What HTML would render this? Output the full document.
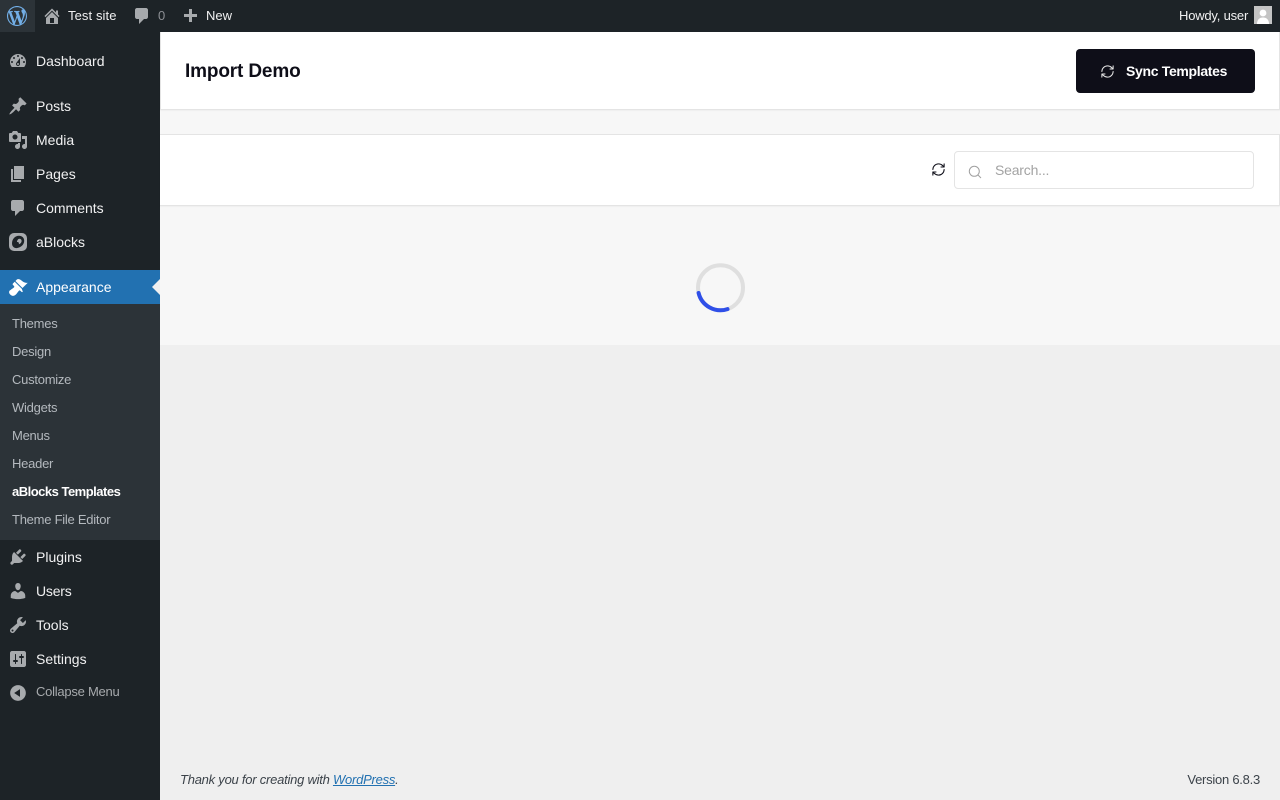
<!DOCTYPE html>
<html lang="en"><head><meta charset="utf-8"><title>Import Demo</title>
<style>
*{box-sizing:border-box}
html,body{margin:0;padding:0;width:1280px;height:800px;overflow:hidden;background:#efefef;font-family:"Liberation Sans",sans-serif;font-size:14px;color:#3c434a}
.a{position:absolute;white-space:nowrap}
#bar{left:0;top:0;width:1280px;height:32px;background:#1d2327}
#side{left:0;top:32px;width:160px;height:768px;background:#1d2327}
.t{position:absolute;line-height:20px;white-space:nowrap}
.m{color:#f0f0f1;font-size:14px;left:36px}
.s{color:#b4b9be;font-size:13px;left:12px;letter-spacing:-.25px}
.b{color:#f0f0f1;font-size:13px}
svg{position:absolute;display:block}
.i{fill:#a7aaad}
</style></head><body>
<div class="a" id="bar"></div>
<div class="a" id="side"></div>
<div class="a" style="left:0;top:0;width:35px;height:32px;background:#2c3338"></div>
<svg style="left:7px;top:6px" width="20" height="20" viewBox="0 0 20 20"><path fill="#72aee6" fill-rule="evenodd" d="M20 10c0-5.51-4.49-10-10-10C4.48 0 0 4.49 0 10c0 5.52 4.48 10 10 10 5.51 0 10-4.48 10-10zM7.78 15.37L4.37 6.22c.55-.02 1.17-.08 1.17-.08.5-.06.44-1.13-.06-1.11 0 0-1.45.11-2.37.11-.18 0-.37 0-.58-.01C4.12 2.69 6.87 1.11 10 1.11c2.33 0 4.45.87 6.05 2.34-.68-.11-1.65.39-1.65 1.58 0 .74.45 1.36.9 2.1.35.61.55 1.36.55 2.46 0 1.49-1.4 5-1.4 5l-3.03-8.37c.54-.02.82-.17.82-.17.5-.05.44-1.25-.06-1.22 0 0-1.44.12-2.38.12-.87 0-2.33-.12-2.33-.12-.5-.03-.56 1.2-.06 1.22l.92.08 1.26 3.41zM17.41 10c.24-.64.74-1.87.43-4.25.7 1.29 1.05 2.71 1.05 4.25 0 3.29-1.73 6.24-4.4 7.78.97-2.59 1.94-5.2 2.92-7.78zM6.1 18.09C3.12 16.65 1.11 13.53 1.11 10c0-1.3.23-2.48.72-3.59C3.25 10.3 4.67 14.2 6.1 18.09zm4.03-6.63l2.58 6.98c-.86.29-1.76.45-2.71.45-.79 0-1.57-.11-2.29-.33.81-2.38 1.62-4.74 2.42-7.1z"/></svg>
<svg class="i" style="left:42px;top:6px" width="20" height="20" viewBox="0 0 20 20"><path d="M16 8.5l1.53 1.53-1.06 1.06L10 4.62l-6.47 6.47-1.06-1.06L10 2.5l4 4v-2h2v4zm-6-2.46l6 5.99V18H4v-5.97zM12 17v-5H8v5h4z"/></svg>
<div class="t b" style="left:68px;top:6px;letter-spacing:.1px">Test site</div>
<svg class="i" style="left:132px;top:6px" width="20" height="20" viewBox="0 0 20 20"><path d="M5 2h9c1.1 0 2 .9 2 2v7c0 1.1-.9 2-2 2h-2l-5 5v-5H5c-1.1 0-2-.9-2-2V4c0-1.1.9-2 2-2z"/></svg>
<div class="t" style="left:158px;top:6px;font-size:13px;color:#8c8f94">0</div>
<svg class="i" style="left:180px;top:7px" width="20" height="20" viewBox="0 0 20 20"><path d="M17 7v3h-5v5H9v-5H4V7h5V2h3v5h5z"/></svg>
<div class="t b" style="left:206px;top:6px">New</div>
<div class="t b" style="left:1179px;top:6px;letter-spacing:-.2px">Howdy, user</div>
<div class="a" style="left:1254px;top:6px;width:18px;height:18px;background:#c4c4c4;overflow:hidden"><svg style="left:0;top:0" width="18" height="18" viewBox="0 0 18 18"><circle cx="9" cy="7" r="3.4" fill="#fff"/><path fill="#fff" d="M3 18c0-4.5 2.5-6.5 6-6.5s6 2 6 6.5z"/></svg></div>

<svg class="i" style="left:8px;top:51px" width="20" height="20" viewBox="0 0 20 20"><path d="M3.76 16h12.48c1.1-1.37 1.76-3.11 1.76-5 0-4.42-3.58-8-8-8s-8 3.58-8 8c0 1.89.66 3.63 1.76 5zM10 4c.55 0 1 .45 1 1s-.45 1-1 1-1-.45-1-1 .45-1 1-1zM6 6c.55 0 1 .45 1 1s-.45 1-1 1-1-.45-1-1 .45-1 1-1zm8 0c.55 0 1 .45 1 1s-.45 1-1 1-1-.45-1-1 .45-1 1-1zm-5.37 5.55L12 7v6c0 1.1-.9 2-2 2s-2-.9-2-2c0-.57.24-1.08.63-1.45zM4 10c.55 0 1 .45 1 1s-.45 1-1 1-1-.45-1-1 .45-1 1-1zm12 0c.55 0 1 .45 1 1s-.45 1-1 1-1-.45-1-1 .45-1 1-1zm-5 3c0-.55-.45-1-1-1s-1 .45-1 1 .45 1 1 1 1-.45 1-1z"/></svg>
<div class="t m" style="top:51px">Dashboard</div>
<svg class="i" style="left:8px;top:96px" width="20" height="20" viewBox="0 0 20 20"><path d="M10.44 3.02l1.82-1.82 6.36 6.35-1.83 1.82c-1.05-.68-2.48-.57-3.41.36l-.75.75c-.92.93-1.04 2.35-.35 3.41l-1.83 1.82-2.41-2.41-2.8 2.79c-.42.42-3.38 2.71-3.8 2.29s1.86-3.39 2.28-3.81l2.79-2.79L4.1 9.36l1.83-1.82c1.05.69 2.48.57 3.4-.36l.75-.75c.93-.92 1.05-2.35.36-3.41z"/></svg>
<div class="t m" style="top:96px">Posts</div>
<svg class="i" style="left:8px;top:130px" width="20" height="20" viewBox="0 0 20 20"><path d="M13 11V4c0-.55-.45-1-1-1h-1.67L9 1H5L3.67 3H2c-.55 0-1 .45-1 1v7c0 .55.45 1 1 1h10c.55 0 1-.45 1-1zM7 4.5c1.38 0 2.5 1.12 2.5 2.5S8.38 9.5 7 9.5 4.5 8.38 4.5 7 5.62 4.5 7 4.5zM14 6h5v10.5c0 1.38-1.12 2.5-2.5 2.5S14 17.88 14 16.5s1.12-2.5 2.5-2.5c.17 0 .34.02.5.05V9h-3V6zm-4 8.05V13h2v3.5c0 1.38-1.12 2.5-2.5 2.5S7 17.88 7 16.5 8.12 14 9.5 14c.17 0 .34.02.5.05z"/></svg>
<div class="t m" style="top:130px">Media</div>
<svg class="i" style="left:8px;top:164px" width="20" height="20" viewBox="0 0 20 20"><path d="M6 15V2h10v13H6zm-1 1h8v2H3V5h2v11z"/></svg>
<div class="t m" style="top:164px">Pages</div>
<svg class="i" style="left:8px;top:198px" width="20" height="20" viewBox="0 0 20 20"><path d="M5 2h9c1.1 0 2 .9 2 2v7c0 1.1-.9 2-2 2h-2l-5 5v-5H5c-1.1 0-2-.9-2-2V4c0-1.1.9-2 2-2z"/></svg>
<div class="t m" style="top:198px">Comments</div>
<svg style="left:9px;top:233px" width="18" height="18" viewBox="0 0 18 18"><rect width="18" height="18" rx="5" fill="#a7aaad"/><path fill="#1d2327" d="M10 2.8c3 0 5.2 2.1 5.2 5 0 3.6-3.2 7-7.4 7.3C5 15.3 3 13.4 3 10.4 3 6.2 6 2.8 10 2.8z"/><path fill="#a7aaad" d="M10.4 5.8c1.3 0 2.2.9 2.2 2.1 0 1.5-1.1 3-2.8 3.3.3-1 .1-1.7-.5-2-.5-.3-1-.3-1.4-.1.3-1.9 1.2-3.3 2.5-3.3z"/></svg>
<div class="t m" style="top:232px">aBlocks</div>

<div class="a" style="left:0;top:270px;width:160px;height:34px;background:#2271b1"></div>
<div class="a" style="left:152px;top:279px;width:0;height:0;border:8px solid transparent;border-left:0;border-right-color:#f0f0f1"></div>
<svg style="left:8px;top:277px;fill:#fff" width="20" height="20" viewBox="0 0 20 20"><path d="M14.48 11.06L7.41 3.99l1.5-1.5c.5-.56 2.3-.47 3.51.32 1.21.8 1.43 1.28 2.91 2.1 1.18.64 2.45 1.26 4.45.85zm-.71.71L6.7 4.7 4.93 6.47c-.39.39-.39 1.02 0 1.41l1.06 1.06c.39.39.39 1.03 0 1.42-.6.6-1.43 1.11-2.21 1.69-.35.26-.7.53-1.01.84C1.43 13.23 0 15.37 2.32 17.68s4.45.89 6.08-.74c.31-.31.58-.66.84-1.01.58-.78 1.09-1.61 1.69-2.21.39-.39 1.02-.39 1.41 0l1.06 1.06c.39.39 1.02.39 1.41 0z"/></svg>
<div class="t m" style="top:277px;color:#fff">Appearance</div>
<div class="a" style="left:0;top:304px;width:160px;height:236px;background:#2c3338"></div>
<div class="t s" style="top:314px">Themes</div>
<div class="t s" style="top:342px">Design</div>
<div class="t s" style="top:370px">Customize</div>
<div class="t s" style="top:398px">Widgets</div>
<div class="t s" style="top:426px">Menus</div>
<div class="t s" style="top:454px">Header</div>
<div class="t s" style="top:482px;color:#fff;font-weight:bold;letter-spacing:-.5px">aBlocks Templates</div>
<div class="t s" style="top:510px">Theme File Editor</div>

<svg class="i" style="left:8px;top:547px" width="20" height="20" viewBox="0 0 20 20"><path d="M13.11 4.36L9.87 7.6 8 5.73l3.24-3.24c.35-.34 1.05-.2 1.56.32.52.51.66 1.21.31 1.55zm-8 1.77l.91-1.12 9.01 9.01-1.19.84c-.71.71-2.63 1.16-3.82 1.16H6.14L4.9 17.26c-.59.59-1.54.59-2.12 0-.59-.58-.59-1.53 0-2.12l1.24-1.24v-3.88c0-1.13.4-3.19 1.09-3.89zm7.26 3.97l3.24-3.24c.34-.35 1.04-.21 1.55.31.52.51.66 1.21.31 1.55l-3.24 3.25z"/></svg>
<div class="t m" style="top:547px">Plugins</div>
<svg class="i" style="left:8px;top:581px" width="20" height="20" viewBox="0 0 20 20"><path d="M10 9.25c-2.27 0-2.73-3.44-2.73-3.44C7 4.02 7.82 2 9.97 2c2.16 0 2.98 2.02 2.71 3.81 0 0-.41 3.44-2.68 3.44zm0 2.57L12.72 10c2.39 0 4.52 2.33 4.52 4.53v2.49s-3.65 1.13-7.24 1.13c-3.65 0-7.24-1.13-7.24-1.13v-2.49c0-2.25 1.94-4.48 4.47-4.48z"/></svg>
<div class="t m" style="top:581px;letter-spacing:-.2px">Users</div>
<svg class="i" style="left:8px;top:615px" width="20" height="20" viewBox="0 0 20 20"><path d="M16.68 9.77c-1.34 1.34-3.3 1.67-4.95.99l-5.41 6.52c-.99.99-2.59.99-3.58 0s-.99-2.59 0-3.57l6.52-5.42c-.68-1.65-.35-3.61.99-4.95 1.28-1.28 3.12-1.62 4.72-1.06l-2.89 2.89 2.82 2.82 2.86-2.87c.53 1.58.18 3.39-1.08 4.65zM3.81 16.21c.4.39 1.04.39 1.43 0 .4-.4.4-1.04 0-1.43-.39-.4-1.03-.4-1.43 0-.39.39-.39 1.03 0 1.43z"/></svg>
<div class="t m" style="top:615px">Tools</div>
<svg class="i" style="left:8px;top:649px" width="20" height="20" viewBox="0 0 20 20"><path d="M18 16V4c0-1.1-.9-2-2-2H4c-1.1 0-2 .9-2 2v12c0 1.1.9 2 2 2h12c1.1 0 2-.9 2-2zM8 11h1c.55 0 1 .45 1 1s-.45 1-1 1H8v1.5c0 .28-.22.5-.5.5s-.5-.22-.5-.5V13H6c-.55 0-1-.45-1-1s.45-1 1-1h1V5.5c0-.28.22-.5.5-.5s.5.22.5.5V11zm5-2h-1c-.55 0-1-.45-1-1s.45-1 1-1h1V5.5c0-.28.22-.5.5-.5s.5.22.5.5V7h1c.55 0 1 .45 1 1s-.45 1-1 1h-1v5.5c0 .28-.22.5-.5.5s-.5-.22-.5-.5V9z"/></svg>
<div class="t m" style="top:649px">Settings</div>
<svg class="i" style="left:8px;top:683px" width="20" height="20" viewBox="0 0 20 20"><path d="M10 2.16c4.33 0 7.84 3.51 7.84 7.84s-3.51 7.84-7.84 7.84S2.16 14.33 2.16 10 5.71 2.16 10 2.16zm2 11.72V6.12L6.18 9.97z"/></svg>
<div class="t" style="left:36px;top:682px;font-size:13px;color:#a7aaad;letter-spacing:-.25px">Collapse Menu</div>

<div class="a" style="left:160px;top:110px;width:1120px;height:235px;background:#f7f7f7"></div>
<div class="a" style="left:160px;top:32px;width:1120px;height:78px;background:#fff;border:1px solid #e4e4e4;border-top:0;box-shadow:0 1px 1px rgba(0,0,0,.04)"></div>
<div class="t" style="left:185px;top:60px;line-height:24px;font-size:19px;font-weight:bold;color:#0e0e18;letter-spacing:-.15px">Import Demo</div>
<div class="a" style="left:1076px;top:49px;width:179px;height:44px;background:#0e0e18;border-radius:4px"></div>
<svg style="left:1100px;top:64px" width="15" height="15" viewBox="0 0 24 24" fill="none" stroke="#e8e8e8" stroke-width="1.6" stroke-linecap="round" stroke-linejoin="round"><path d="M3 12a9 9 0 0 1 9-9 9.75 9.75 0 0 1 6.74 2.74L21 8M21 3v5h-5M21 12a9 9 0 0 1-9 9 9.75 9.75 0 0 1-6.74-2.74L3 16M8 16H3v5"/></svg>
<div class="t" style="left:1126px;top:61px;font-size:14px;font-weight:bold;color:#fff;letter-spacing:-.32px">Sync Templates</div>

<div class="a" style="left:160px;top:134px;width:1120px;height:72px;background:#fff;border:1px solid #e4e4e4;border-left:0;box-shadow:0 1px 1px rgba(0,0,0,.04)"></div>
<svg style="left:931px;top:162px" width="15" height="15" viewBox="0 0 24 24" fill="none" stroke="#0e0e18" stroke-width="1.7" stroke-linecap="round" stroke-linejoin="round"><path d="M3 12a9 9 0 0 1 9-9 9.75 9.75 0 0 1 6.74 2.74L21 8M21 3v5h-5M21 12a9 9 0 0 1-9 9 9.75 9.75 0 0 1-6.74-2.74L3 16M8 16H3v5"/></svg>
<div class="a" style="left:954px;top:151px;width:300px;height:38px;background:#fff;border:1px solid #e4e4e4;border-radius:4px"></div>
<svg style="left:968px;top:165px" width="14" height="14" viewBox="0 0 14 14" fill="none" stroke="#a0a0a0" stroke-width="1"><circle cx="6.3" cy="6.3" r="5"/><path d="M10 10l3 3"/></svg>
<div class="t" style="left:995px;top:160px;font-size:14px;color:#a3a3a3;letter-spacing:-.2px">Search...</div>

<svg style="left:690px;top:258px" width="60" height="60" viewBox="0 0 60 60" fill="none" stroke-width="4"><circle cx="30.5" cy="29.7" r="22.5" stroke="#dfdfdf"/><path d="M8.6 35A22.5 22.5 0 0 0 37.5 51.1" stroke="#2f4fe8" stroke-linecap="round"/></svg>

<div class="t" style="left:180px;top:770px;font-size:13px;font-style:italic;color:#3c434a;letter-spacing:-.24px">Thank you for creating with <span style="color:#2271b1;text-decoration:underline">WordPress</span>.</div>
<div class="t" style="right:20px;top:770px;font-size:13px;color:#3c434a;letter-spacing:-.25px">Version 6.8.3</div>
</body></html>
